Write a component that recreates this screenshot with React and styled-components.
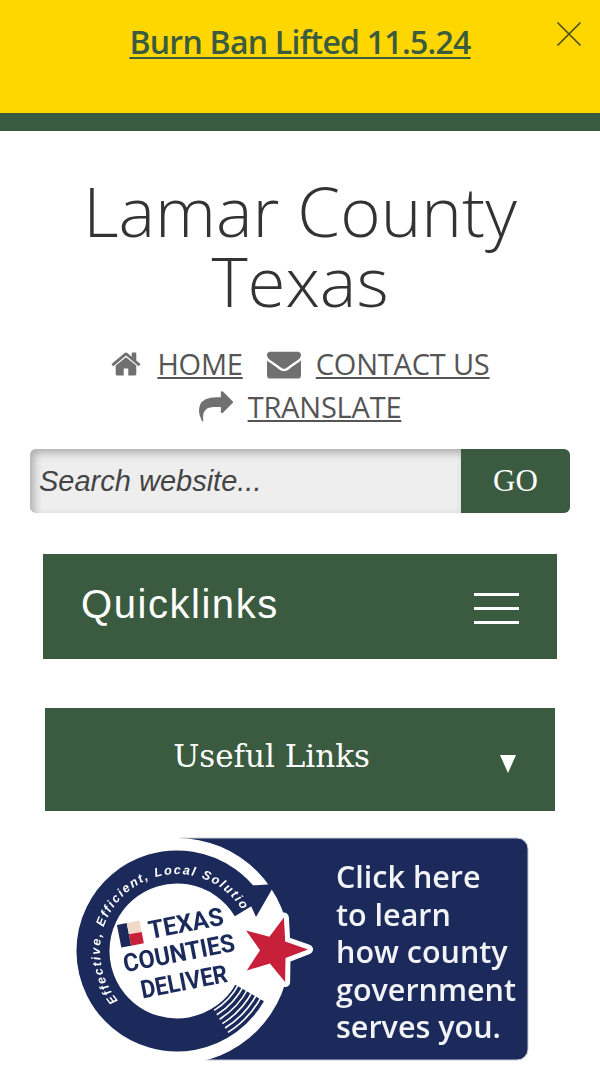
import React from 'react'
import styled, { createGlobalStyle } from 'styled-components'

const GREEN = '#3b5b40'
const NAVY = '#1b2a5a'

const Global = createGlobalStyle`
  html, body { margin:0; padding:0; background:#fff; overflow:hidden; height:1065px; }
  #root { height:1065px; overflow:hidden; }
  * { box-sizing:border-box; }
`

const Alert = styled.div`
  height:131px;
  background:#ffd700;
  border-bottom:18px solid ${GREEN};
  padding-top:20px;
  display:flex;
  justify-content:center;
  position:relative;
`
const AlertLink = styled.a`
  font-family:"Open Sans",sans-serif;
  font-weight:600;
  font-size:32px;
  line-height:44px;
  height:44px;
  letter-spacing:-0.75px;
  color:${GREEN};
  text-decoration:underline;
  text-decoration-thickness:2px;
  text-underline-offset:3px;
`
const Close = styled.svg`
  position:absolute;
  top:21px;
  right:18px;
  width:26px;
  height:26px;
`
const Title = styled.h1`
  margin:44px 0 0;
  font-family:"Open Sans",sans-serif;
  font-weight:300;
  font-size:69px;
  line-height:70px;
  text-align:center;
  color:#333;
`
const TopNav = styled.nav`
  margin:27px auto 0;
  width:480px;
  display:flex;
  flex-wrap:wrap;
  justify-content:center;
  column-gap:24px;
`
const NavItem = styled.a`
  display:flex;
  align-items:center;
  gap:15px;
  height:43px;
  font-family:"Open Sans",sans-serif;
  font-size:29px;
  letter-spacing:-0.2px;
  color:#555;
`
const NavIcon = styled.svg`
  width:${p => p.$w}px;
  height:${p => p.$w}px;
  fill:#707070;
`
const SearchForm = styled.form`
  margin:21px 30px 0;
  height:64px;
  display:flex;
  border-radius:6px;
  overflow:hidden;
`
const SearchInput = styled.input`
  flex:1;
  min-width:0;
  border:0;
  outline:0;
  padding:0 9px;
  background:#eee;
  box-shadow:inset 4px 4px 8px rgba(0,0,0,.28);
  font-family:"Liberation Sans",sans-serif;
  font-style:italic;
  font-size:29px;
  color:#444;
  &::placeholder { color:#444; opacity:1; }
`
const GoButton = styled.button`
  width:109px;
  border:0;
  background:${GREEN};
  color:#fff;
  font-family:"Liberation Serif",serif;
  font-size:31px;
  padding:0;
`
const QuickBar = styled.div`
  margin:41px 43px 0;
  height:105px;
  background:${GREEN};
  display:flex;
  align-items:center;
  justify-content:space-between;
  padding:0 38px;
`
const QuickLabel = styled.span`
  font-family:"Liberation Sans",sans-serif;
  font-size:40px;
  letter-spacing:1.55px;
  color:#fff;
  margin-top:-4px;
`
const Burger = styled.div`
  width:45px;
  display:flex;
  flex-direction:column;
  gap:11px;
  margin-top:4px;
  span { display:block; height:3px; background:#fff; }
`
const UsefulBar = styled.div`
  margin:49px 45px 0;
  height:103px;
  background:${GREEN};
  position:relative;
  display:flex;
  align-items:center;
  justify-content:center;
  padding:0 57px 8px 0;
`
const UsefulLabel = styled.span`
  font-family:"DejaVu Serif",serif;
  font-size:31px;
  color:#fff;
`
const Caret = styled.span`
  position:absolute;
  left:455px;
  top:47px;
  width:0;
  height:0;
  border-left:8px solid transparent;
  border-right:8px solid transparent;
  border-top:18px solid #fff;
`
const Banner = styled.svg`
  display:block;
  margin:20px 0 0 70px;
  width:470px;
  height:240px;
  filter:blur(.5px);
`

const star = (cx, cy, R, r, rot) => {
  const pts = []
  for (let i = 0; i < 10; i++) {
    const a = ((rot + i * 36) * Math.PI) / 180
    const d = i % 2 ? r : R
    pts.push(`${(cx + d * Math.sin(a)).toFixed(1)},${(cy - d * Math.cos(a)).toFixed(1)}`)
  }
  return pts.join(' ')
}

const arc = (r, a0, a1) => {
  const cx = 107, cy = 120
  const p = a => [cx + r * Math.cos((a * Math.PI) / 180), cy + r * Math.sin((a * Math.PI) / 180)]
  const [x0, y0] = p(a0)
  const [x1, y1] = p(a1)
  return `M${x0.toFixed(1)} ${y0.toFixed(1)}A${r} ${r} 0 ${Math.abs(a1 - a0) > 180 ? 1 : 0} ${a1 > a0 ? 1 : 0} ${x1.toFixed(1)} ${y1.toFixed(1)}`
}

const panelLines = ['Click here', 'to learn', 'how county', 'government', 'serves you.']

const CountiesBanner = () => (
  <Banner viewBox="0 0 470 240">
    <defs>
      <path id="ringText" d={arc(77, 140, 345)} />
    </defs>
    <rect x="100" y="7" width="358" height="222" rx="11" fill={NAVY} stroke="#c9ccd4" strokeWidth="1" />
    <circle cx="107" cy="120" r="113" fill="#fff" />
    <path d={arc(84, 30, 329)} fill="none" stroke={NAVY} strokeWidth="33" />
    <polygon points="172,55 205,53 186,86" fill={NAVY} />
    {[0, 1, 2, 3, 4, 5].map(i => (
      <path key={i} d={arc(70 + i * 5.2, 27, 58)} fill="none" stroke="#fff" strokeWidth="1.6" />
    ))}
    <text fontFamily="Liberation Sans, sans-serif" fontWeight="700" fontStyle="italic" fontSize="12.5" letterSpacing="1.7" fill="#fff">
      <textPath href="#ringText">Effective, Efficient, Local Solutions</textPath>
    </text>
    <polygon points={star(204, 119, 34, 14, 17)} fill="#c8203a" stroke="#fff" strokeWidth="10" strokeLinejoin="round" paintOrder="stroke" />
    <g transform="rotate(-11 107 120)">
      <rect x="53" y="83" width="10" height="23" fill={NAVY} />
      <rect x="63" y="83" width="13" height="11.5" fill="#efd9c8" />
      <rect x="63" y="94.5" width="13" height="11.5" fill="#c8203a" />
      <text x="83" y="103" fontFamily="Roboto, sans-serif" fontWeight="700" fontSize="25" fill={NAVY} textLength="76" lengthAdjust="spacingAndGlyphs">TEXAS</text>
      <text x="52" y="131" fontFamily="Roboto, sans-serif" fontWeight="700" fontSize="25" fill={NAVY} textLength="113" lengthAdjust="spacingAndGlyphs">COUNTIES</text>
      <text x="64" y="160" fontFamily="Roboto, sans-serif" fontWeight="700" fontSize="25" fill={NAVY} textLength="88" lengthAdjust="spacingAndGlyphs">DELIVER</text>
    </g>
    {panelLines.map((line, i) => (
      <text key={line} x="266" y={57 + i * 37.6} fontFamily="Open Sans, sans-serif" fontWeight="600" fontSize="30.5" fill="#f2f3f7">{line}</text>
    ))}
  </Banner>
)

const App = () => (
  <>
    <Global />
    <Alert>
      <AlertLink href="#">Burn Ban Lifted 11.5.24</AlertLink>
      <Close viewBox="0 0 26 26">
        <path d="M1.5 1.5L24.5 24.5M24.5 1.5L1.5 24.5" stroke="#4a4a20" strokeWidth="1.6" fill="none" />
      </Close>
    </Alert>
    <Title>Lamar County<br />Texas</Title>
    <TopNav>
      <NavItem href="#">
        <NavIcon $w={32} viewBox="0 0 1792 1792"><path d="M1472 992v480q0 26-19 45t-45 19h-384v-384h-256v384h-384q-26 0-45-19t-19-45v-480q0-1 .5-3t.5-3l575-474 575 474q1 2 1 6zm223-69l-62 74q-8 9-21 11h-3q-13 0-21-7l-692-577-692 577q-12 8-24 7-13-2-21-11l-62-74q-8-10-7-23.5t11-21.5l719-599q32-26 76-26t76 26l244 204v-195q0-14 9-23t23-9h192q14 0 23 9t9 23v408l219 182q10 8 11 21.5t-7 23.5z" /></NavIcon>
        HOME
      </NavItem>
      <NavItem href="#">
        <NavIcon $w={34} viewBox="0 0 1792 1792"><path d="M1792 710v794q0 66-47 113t-113 47h-1472q-66 0-113-47t-47-113v-794q44 49 101 87 362 246 497 345 57 42 92.5 65.5t94.5 48 110 24.5h2q51 0 110-24.5t94.5-48 92.5-65.5q170-123 498-345 57-39 100-87zm0-294q0 79-49 151t-122 123q-376 261-468 325-10 7-42.5 30.5t-54 38-52 32.5-57.5 27-50 9h-2q-23 0-50-9t-57.5-27-52-32.5-54-38-42.5-30.5q-91-64-262-182.5t-205-142.5q-62-42-117-115.5t-55-136.5q0-78 41.5-130t118.5-52h1472q65 0 112.5 47t47.5 113z" /></NavIcon>
        CONTACT US
      </NavItem>
      <NavItem href="#">
        <NavIcon $w={34} viewBox="0 0 1792 1792"><path d="M1792 640q0 26-19 45l-512 512q-19 19-45 19t-45-19-19-45v-256h-224q-98 0-175.5 6t-154 21.5-133 42.5-105.5 69.5-80 101-48.5 138.5-17.5 181q0 55 5 123 0 6 2.5 23.5t2.5 26.5q0 15-8.5 25t-23.5 10q-16 0-28-17-7-9-13-22t-13.5-30-10.5-24q-127-285-127-451 0-199 53-333 162-403 875-403h224v-256q0-26 19-45t45-19 45 19l512 512q19 19 19 45z" /></NavIcon>
        TRANSLATE
      </NavItem>
    </TopNav>
    <SearchForm onSubmit={e => e.preventDefault()}>
      <SearchInput placeholder="Search website..." />
      <GoButton>GO</GoButton>
    </SearchForm>
    <QuickBar>
      <QuickLabel>Quicklinks</QuickLabel>
      <Burger><span /><span /><span /></Burger>
    </QuickBar>
    <UsefulBar>
      <UsefulLabel>Useful Links</UsefulLabel>
      <Caret />
    </UsefulBar>
    <CountiesBanner />
  </>
)

export default App
